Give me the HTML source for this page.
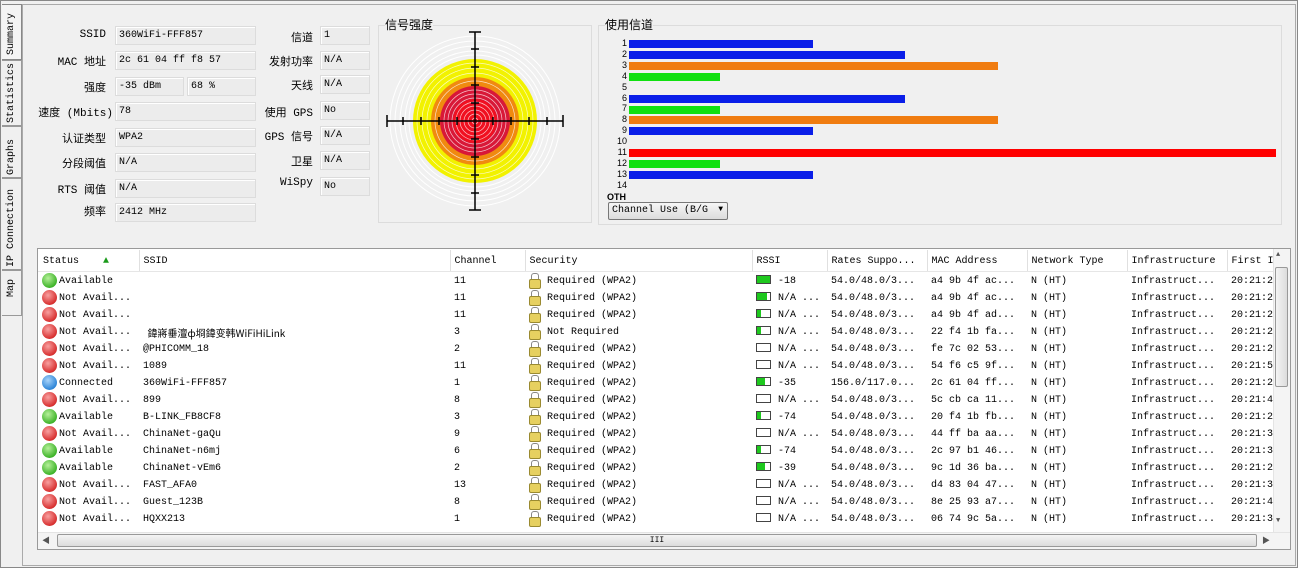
<!DOCTYPE html>
<html><head><meta charset="utf-8"><style>
*{margin:0;padding:0;box-sizing:border-box}
body{width:1298px;height:568px;background:#f0f0f0;position:relative;overflow:hidden;font-family:"Liberation Mono","Noto Sans CJK SC",monospace;font-size:10px;color:#000}
.a{position:absolute;white-space:nowrap}
.lb{position:absolute;text-align:right;font-size:11px;font-family:"Liberation Mono","Noto Sans CJK SC",monospace}
.bx{position:absolute;height:19px;border:1px solid #dcdcdc;background:#ececec;padding:0 3px;line-height:17px;font-size:10px;box-shadow:inset 1px 1px 0 #fff}
.vt{position:absolute;left:2px;width:20px;border:1px solid #999;border-left:none;background:#f0f0f0}
.vt span{position:absolute;left:4px;transform:rotate(-90deg);transform-origin:left top;font-size:10px;white-space:nowrap}
table{border-collapse:collapse;position:absolute;left:39px;top:250px;table-layout:fixed}
td,th{font-weight:normal;text-align:left;white-space:nowrap;overflow:hidden;padding:0 0 0 4px;font-size:10px}
td{height:17px;line-height:15px;padding-top:2px}
th{height:22px;border-right:1px solid #e0e0e0;background:#fff}
.d{display:inline-block;width:15px;height:15px;border-radius:50%;vertical-align:top;margin:-1px 2px 0 -1px}
.g{background:radial-gradient(circle at 40% 35%,#b6f09a,#3fb42a 70%,#2a8a1c)}
.r{background:radial-gradient(circle at 40% 35%,#f8a0a0,#d83030 70%,#a01818)}
.b{background:radial-gradient(circle at 40% 35%,#a8d4fa,#2f86d8 70%,#1a5ea8)}
.lk{display:inline-block;width:10px;height:14px;vertical-align:top;margin:-1px 8px 0 0;position:relative}
.lk:before{content:"";position:absolute;left:2px;top:0;width:6px;height:7px;border:1.5px solid #888;border-bottom:none;border-radius:3px 3px 0 0}
.lk:after{content:"";position:absolute;left:0;top:6px;width:10px;height:8px;background:#e6d060;border:1px solid #9a8a30;border-radius:2px}
.rs{display:inline-block;width:15px;height:9px;border:1px solid #444;vertical-align:top;margin:1px 7px 0 0;background:#fff;position:relative}
.rs i{position:absolute;left:0;top:0;bottom:0;background:#1ec81e}
</style></head><body>
<div class="a" style="left:0;top:0;width:1298px;height:568px;border:1px solid #888"></div>
<div class="a" style="left:22px;top:4px;width:1274px;height:562px;border:1px solid #aaa;background:#f0f0f0"></div>
<div class="vt" style="top:4px;height:56px;background:#f4f4f4;border-color:#888"><span style="top:50px">Summary</span></div>
<div class="vt" style="top:60px;height:66px"><span style="top:62px">Statistics</span></div>
<div class="vt" style="top:126px;height:52px"><span style="top:48px">Graphs</span></div>
<div class="vt" style="top:178px;height:92px"><span style="top:88px">IP Connection</span></div>
<div class="vt" style="top:270px;height:46px"><span style="top:26px">Map</span></div>

<div class="lb" style="left:40px;width:66px;top:29px">SSID</div><div class="bx" style="left:115px;top:26px;width:141px">360WiFi-FFF857</div>
<div class="lb" style="left:40px;width:66px;top:53px">MAC 地址</div><div class="bx" style="left:115px;top:51px;width:141px">2c 61 04 ff f8 57</div>
<div class="lb" style="left:40px;width:66px;top:79px">强度</div><div class="bx" style="left:115px;top:77px;width:69px">-35 dBm</div><div class="bx" style="left:187px;top:77px;width:69px">68 %</div>
<div class="lb" style="left:30px;width:83px;top:104px">速度 (Mbits)</div><div class="bx" style="left:115px;top:102px;width:141px">78</div>
<div class="lb" style="left:40px;width:66px;top:130px">认证类型</div><div class="bx" style="left:115px;top:128px;width:141px">WPA2</div>
<div class="lb" style="left:40px;width:66px;top:155px">分段阈值</div><div class="bx" style="left:115px;top:153px;width:141px">N/A</div>
<div class="lb" style="left:40px;width:66px;top:181px">RTS 阈值</div><div class="bx" style="left:115px;top:179px;width:141px">N/A</div>
<div class="lb" style="left:40px;width:66px;top:203px">频率</div><div class="bx" style="left:115px;top:203px;width:141px">2412 MHz</div>

<div class="lb" style="left:250px;width:63px;top:29px">信道</div><div class="bx" style="left:320px;top:26px;width:50px">1</div>
<div class="lb" style="left:250px;width:63px;top:53px">发射功率</div><div class="bx" style="left:320px;top:51px;width:50px">N/A</div>
<div class="lb" style="left:250px;width:63px;top:77px">天线</div><div class="bx" style="left:320px;top:75px;width:50px">N/A</div>
<div class="lb" style="left:250px;width:63px;top:104px">使用 GPS</div><div class="bx" style="left:320px;top:101px;width:50px">No</div>
<div class="lb" style="left:250px;width:63px;top:128px">GPS 信号</div><div class="bx" style="left:320px;top:126px;width:50px">N/A</div>
<div class="lb" style="left:250px;width:63px;top:153px">卫星</div><div class="bx" style="left:320px;top:151px;width:50px">N/A</div>
<div class="lb" style="left:250px;width:63px;top:177px">WiSpy</div><div class="bx" style="left:320px;top:177px;width:50px">No</div>

<div class="a" style="left:378px;top:25px;width:214px;height:198px;border:1px solid #dcdcdc"></div>
<div class="a" style="left:385px;top:16px;font-size:12px;background:#f0f0f0;font-family:'Noto Sans CJK SC',sans-serif">信号强度</div>
<svg class="a" style="left:378px;top:25px" width="214" height="198">
<g fill="none" stroke="#fff" stroke-width="1">
<circle cx="97" cy="96" r="85"/><circle cx="97" cy="96" r="80"/><circle cx="97" cy="96" r="75"/><circle cx="97" cy="96" r="70"/><circle cx="97" cy="96" r="66"/></g>
<circle cx="97" cy="96" r="62" fill="#f2f200"/>
<circle cx="97" cy="96" r="44" fill="#f08a10"/>
<circle cx="97" cy="96" r="35" fill="#d81838"/>
<circle cx="97" cy="96" r="22" fill="#f01020"/>
<g fill="none" stroke="#fff" stroke-width="0.7" opacity=".75">
<circle cx="97" cy="96" r="58"/><circle cx="97" cy="96" r="53"/><circle cx="97" cy="96" r="48"/><circle cx="97" cy="96" r="40"/><circle cx="97" cy="96" r="31"/><circle cx="97" cy="96" r="27"/><circle cx="97" cy="96" r="23"/><circle cx="97" cy="96" r="19"/><circle cx="97" cy="96" r="15"/><circle cx="97" cy="96" r="11"/><circle cx="97" cy="96" r="7"/><circle cx="97" cy="96" r="3"/></g>
<g stroke="#000" stroke-width="1.5">
<line x1="9" y1="96" x2="185" y2="96"/><line x1="97" y1="7" x2="97" y2="185"/>
<line x1="9" y1="90" x2="9" y2="102"/><line x1="185" y1="90" x2="185" y2="102"/>
<line x1="91" y1="7" x2="103" y2="7"/><line x1="91" y1="185" x2="103" y2="185"/>
<path d="M25 92v8M43 92v8M61 92v8M79 92v8M115 92v8M133 92v8M151 92v8M169 92v8M93 24h8M93 42h8M93 60h8M93 78h8M93 114h8M93 132h8M93 150h8M93 168h8"/></g>
</svg>

<div class="a" style="left:598px;top:25px;width:684px;height:200px;border:1px solid #dcdcdc"></div>
<div class="a" style="left:605px;top:16px;font-size:12px;background:#f0f0f0;font-family:'Noto Sans CJK SC',sans-serif">使用信道</div>
<div class="a" style="left:600px;top:38px;width:27px;font-size:9px;line-height:10.9px;text-align:right;font-family:'Liberation Sans',sans-serif">1<br>2<br>3<br>4<br>5<br>6<br>7<br>8<br>9<br>10<br>11<br>12<br>13<br>14</div>
<div class="a" style="left:607px;top:192px;font-size:9px;font-weight:bold;font-family:'Liberation Sans',sans-serif">OTH</div>
<div class="a" style="left:629px;top:40px;width:184px;height:8px;background:#0a1ee8"></div>
<div class="a" style="left:629px;top:51px;width:276px;height:8px;background:#0a1ee8"></div>
<div class="a" style="left:629px;top:62px;width:369px;height:8px;background:#f07c10"></div>
<div class="a" style="left:629px;top:73px;width:91px;height:8px;background:#10e010"></div>
<div class="a" style="left:629px;top:95px;width:276px;height:8px;background:#0a1ee8"></div>
<div class="a" style="left:629px;top:106px;width:91px;height:8px;background:#10e010"></div>
<div class="a" style="left:629px;top:116px;width:369px;height:8px;background:#f07c10"></div>
<div class="a" style="left:629px;top:127px;width:184px;height:8px;background:#0a1ee8"></div>
<div class="a" style="left:629px;top:149px;width:647px;height:8px;background:#f00"></div>
<div class="a" style="left:629px;top:160px;width:91px;height:8px;background:#10e010"></div>
<div class="a" style="left:629px;top:171px;width:184px;height:8px;background:#0a1ee8"></div>
<div class="a" style="left:608px;top:202px;width:120px;height:18px;border:1px solid #777;border-radius:2px;background:linear-gradient(#f6f6f6,#dcdcdc);padding:2px 3px;font-size:10px">Channel Use (B/G <span style="position:absolute;right:4px;top:2px;font-size:8px">▼</span></div>

<div class="a" style="left:37px;top:248px;width:1254px;height:302px;border:1px solid #999;background:#fff"></div>
<table>
<colgroup><col style="width:100px"><col style="width:311px"><col style="width:75px"><col style="width:227px"><col style="width:75px"><col style="width:100px"><col style="width:100px"><col style="width:100px"><col style="width:100px"><col style="width:46px"></colgroup>
<tr><th>Status <span style="color:#1a9a1a;margin-left:18px">▲</span></th><th>SSID</th><th>Channel</th><th>Security</th><th>RSSI</th><th>Rates Suppo...</th><th>MAC Address</th><th>Network Type</th><th>Infrastructure</th><th>First I</th></tr>
<tr><td><i class="d g"></i>Available</td><td></td><td>11</td><td><i class="lk"></i>Required (WPA2)</td><td><i class="rs"><i style="width:13px"></i></i>-18</td><td>54.0/48.0/3...</td><td>a4 9b 4f ac...</td><td>N (HT)</td><td>Infrastruct...</td><td>20:21:2</td></tr>
<tr><td><i class="d r"></i>Not Avail...</td><td></td><td>11</td><td><i class="lk"></i>Required (WPA2)</td><td><i class="rs"><i style="width:10px"></i></i>N/A ...</td><td>54.0/48.0/3...</td><td>a4 9b 4f ac...</td><td>N (HT)</td><td>Infrastruct...</td><td>20:21:2</td></tr>
<tr><td><i class="d r"></i>Not Avail...</td><td></td><td>11</td><td><i class="lk"></i>Required (WPA2)</td><td><i class="rs"><i style="width:4px"></i></i>N/A ...</td><td>54.0/48.0/3...</td><td>a4 9b 4f ad...</td><td>N (HT)</td><td>Infrastruct...</td><td>20:21:2</td></tr>
<tr><td><i class="d r"></i>Not Avail...</td><td style="font-family:'Noto Sans CJK SC',monospace;line-height:13px">&nbsp;&nbsp;鍏嶈垂澶ф埛鍏变韩WiFiHiLink</td><td>3</td><td><i class="lk"></i>Not Required</td><td><i class="rs"><i style="width:4px"></i></i>N/A ...</td><td>54.0/48.0/3...</td><td>22 f4 1b fa...</td><td>N (HT)</td><td>Infrastruct...</td><td>20:21:2</td></tr>
<tr><td><i class="d r"></i>Not Avail...</td><td>@PHICOMM_18</td><td>2</td><td><i class="lk"></i>Required (WPA2)</td><td><i class="rs"></i>N/A ...</td><td>54.0/48.0/3...</td><td>fe 7c 02 53...</td><td>N (HT)</td><td>Infrastruct...</td><td>20:21:2</td></tr>
<tr><td><i class="d r"></i>Not Avail...</td><td>1089</td><td>11</td><td><i class="lk"></i>Required (WPA2)</td><td><i class="rs"></i>N/A ...</td><td>54.0/48.0/3...</td><td>54 f6 c5 9f...</td><td>N (HT)</td><td>Infrastruct...</td><td>20:21:5</td></tr>
<tr><td><i class="d b"></i>Connected</td><td>360WiFi-FFF857</td><td>1</td><td><i class="lk"></i>Required (WPA2)</td><td><i class="rs"><i style="width:8px"></i></i>-35</td><td>156.0/117.0...</td><td>2c 61 04 ff...</td><td>N (HT)</td><td>Infrastruct...</td><td>20:21:2</td></tr>
<tr><td><i class="d r"></i>Not Avail...</td><td>899</td><td>8</td><td><i class="lk"></i>Required (WPA2)</td><td><i class="rs"></i>N/A ...</td><td>54.0/48.0/3...</td><td>5c cb ca 11...</td><td>N (HT)</td><td>Infrastruct...</td><td>20:21:4</td></tr>
<tr><td><i class="d g"></i>Available</td><td>B-LINK_FB8CF8</td><td>3</td><td><i class="lk"></i>Required (WPA2)</td><td><i class="rs"><i style="width:4px"></i></i>-74</td><td>54.0/48.0/3...</td><td>20 f4 1b fb...</td><td>N (HT)</td><td>Infrastruct...</td><td>20:21:2</td></tr>
<tr><td><i class="d r"></i>Not Avail...</td><td>ChinaNet-gaQu</td><td>9</td><td><i class="lk"></i>Required (WPA2)</td><td><i class="rs"></i>N/A ...</td><td>54.0/48.0/3...</td><td>44 ff ba aa...</td><td>N (HT)</td><td>Infrastruct...</td><td>20:21:3</td></tr>
<tr><td><i class="d g"></i>Available</td><td>ChinaNet-n6mj</td><td>6</td><td><i class="lk"></i>Required (WPA2)</td><td><i class="rs"><i style="width:4px"></i></i>-74</td><td>54.0/48.0/3...</td><td>2c 97 b1 46...</td><td>N (HT)</td><td>Infrastruct...</td><td>20:21:3</td></tr>
<tr><td><i class="d g"></i>Available</td><td>ChinaNet-vEm6</td><td>2</td><td><i class="lk"></i>Required (WPA2)</td><td><i class="rs"><i style="width:8px"></i></i>-39</td><td>54.0/48.0/3...</td><td>9c 1d 36 ba...</td><td>N (HT)</td><td>Infrastruct...</td><td>20:21:2</td></tr>
<tr><td><i class="d r"></i>Not Avail...</td><td>FAST_AFA0</td><td>13</td><td><i class="lk"></i>Required (WPA2)</td><td><i class="rs"></i>N/A ...</td><td>54.0/48.0/3...</td><td>d4 83 04 47...</td><td>N (HT)</td><td>Infrastruct...</td><td>20:21:3</td></tr>
<tr><td><i class="d r"></i>Not Avail...</td><td>Guest_123B</td><td>8</td><td><i class="lk"></i>Required (WPA2)</td><td><i class="rs"></i>N/A ...</td><td>54.0/48.0/3...</td><td>8e 25 93 a7...</td><td>N (HT)</td><td>Infrastruct...</td><td>20:21:4</td></tr>
<tr><td><i class="d r"></i>Not Avail...</td><td>HQXX213</td><td>1</td><td><i class="lk"></i>Required (WPA2)</td><td><i class="rs"></i>N/A ...</td><td>54.0/48.0/3...</td><td>06 74 9c 5a...</td><td>N (HT)</td><td>Infrastruct...</td><td>20:21:3</td></tr>
</table>
<div class="a" style="left:38px;top:271px;width:1235px;height:1px;background:#e6e6e6"></div>
<div class="a" style="left:1273px;top:249px;width:17px;height:283px;background:#f4f4f4;border-left:1px solid #e4e4e4"></div>
<div class="a" style="left:1276px;top:251px;font-size:7px;color:#555">▲</div>
<div class="a" style="left:1275px;top:267px;width:13px;height:120px;border:1px solid #999;border-radius:2px;background:linear-gradient(90deg,#f4f4f4,#dcdcdc)"></div>
<div class="a" style="left:1276px;top:517px;font-size:7px;color:#555">▼</div>
<div class="a" style="left:38px;top:532px;width:1252px;height:17px;background:#f4f4f4;border-top:1px solid #e4e4e4"></div>
<div class="a" style="left:42px;top:535px;font-size:8px;color:#555">◀</div>
<div class="a" style="left:57px;top:534px;width:1200px;height:13px;border:1px solid #999;border-radius:2px;background:linear-gradient(#f4f4f4,#dcdcdc);text-align:center;font-size:8px;line-height:11px">III</div>
<div class="a" style="left:1262px;top:535px;font-size:8px;color:#555">▶</div>
</body></html>
